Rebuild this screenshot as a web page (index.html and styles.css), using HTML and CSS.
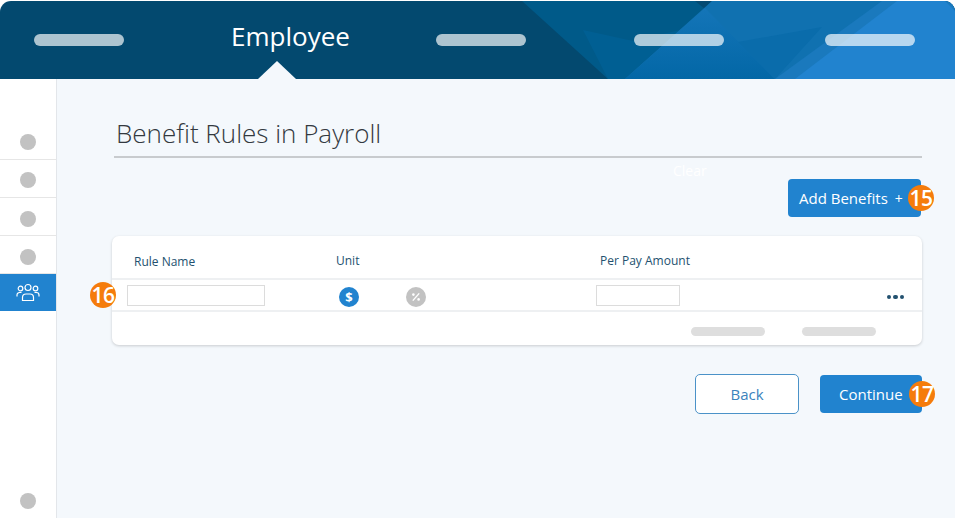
FILE: index.html
```html
<!DOCTYPE html>
<html lang="en">
<head>
    <meta charset="UTF-8">
    <meta name="viewport" content="width=device-width, initial-scale=1.0">
    <title>Benefit Rules in Payroll</title>
    <link rel="stylesheet" href="styles.css">
</head>
<body>
    <header class="topbar">
        <svg class="topbar-bg" viewBox="0 0 955 78" preserveAspectRatio="none" aria-hidden="true">
            <defs>
                <linearGradient id="facet" x1="0" y1="0" x2="0" y2="1">
                    <stop offset="0" stop-color="#1475b8"/>
                    <stop offset="1" stop-color="#0367a6"/>
                </linearGradient>
            </defs>
            <polygon points="522,0 955,0 955,78 608,78" fill="#005a89"/>
            <polygon points="583,29 633,40 680,29 625,78 608,78" fill="#005f93"/>
            <polygon points="695,0 712,0 705,8" fill="#044a72"/>
            <polygon points="712,0 955,0 955,78 625,78" fill="#1071b0"/>
            <polygon points="705,7 775,78 625,78" fill="url(#facet)"/>
            <polygon points="738,41 822,26 775,78" fill="#0a6cab"/>
            <polygon points="882,0 955,0 955,78 775,78" fill="#1a79bd"/>
            <polygon points="897,0 945,0 955,10 955,78 795,78" fill="#2183cf"/>
        </svg>
        <span class="step step-first"></span>
        <div class="step-current">Employee</div>
        <span class="step step-third"></span>
        <span class="step step-fourth"></span>
        <span class="step step-last"></span>
    </header>

    <div class="layout">
        <nav class="sidebar">
            <a class="side-item"><span class="dot"></span></a>
            <a class="side-item"><span class="dot"></span></a>
            <a class="side-item lower"><span class="dot"></span></a>
            <a class="side-item lower"><span class="dot"></span></a>
            <a class="side-item active">
                <svg width="24" height="20" viewBox="0 0 24 20" fill="none" stroke="#fff" stroke-width="1.2" aria-hidden="true">
                    <circle cx="12" cy="4.5" r="3"/>
                    <circle cx="4.5" cy="5.5" r="2.3"/>
                    <circle cx="19.5" cy="5.5" r="2.3"/>
                    <path d="M6.5 17.5v-3a3.5 3.5 0 0 1 3.5-3.5h4a3.5 3.5 0 0 1 3.5 3.5v3z"/>
                    <path d="M1 13.5v-1.5a2.5 2.5 0 0 1 2.5-2.5h2"/>
                    <path d="M23 13.5v-1.5a2.5 2.5 0 0 0-2.5-2.5h-2"/>
                </svg>
            </a>
            <span class="dot dot-bottom"></span>
        </nav>

        <main class="content">
            <h1 class="page-title">Benefit Rules in Payroll</h1>
            <div class="toolbar">
                <span class="clear-link">Clear</span>
                <button class="btn btn-primary btn-add">Add Benefits <span class="plus">+</span>
                    <span class="badge">15</span>
                </button>
            </div>

            <section class="card">
                <div class="card-head">
                    <span class="head-name">Rule Name</span>
                    <span>Unit</span>
                    <span>Per Pay Amount</span>
                </div>
                <div class="card-row">
                    <span class="badge badge-row">16</span>
                    <input type="text" class="field field-name">
                    <span class="unit unit-on">$</span>
                    <span class="unit unit-off">
                        <svg width="10" height="10" viewBox="0 0 10 10" aria-hidden="true">
                            <path d="M8.2 1.4 1.8 8.6" stroke="#fff" stroke-width="1.4"/>
                            <circle cx="2.4" cy="2.6" r="1.3" fill="#fff"/>
                            <circle cx="7.6" cy="7.4" r="1.3" fill="#fff"/>
                        </svg>
                    </span>
                    <input type="text" class="field field-amount">
                    <span class="more"><i></i><i></i><i></i></span>
                </div>
                <div class="card-foot">
                    <span class="foot-pill"></span>
                    <span class="foot-pill"></span>
                </div>
            </section>

            <div class="actions">
                <button class="btn btn-outline">Back</button>
                <button class="btn btn-primary btn-continue">Continue
                    <span class="badge">17</span>
                </button>
            </div>
        </main>
    </div>
</body>
</html>
```

FILE: styles.css
```css
* {
    box-sizing: border-box;
}

html,
body {
    height: 100%;
}

body {
    margin: 0;
    font-family: "Open Sans", "Liberation Sans", sans-serif;
    background-color: #fff;
    overflow: hidden;
}

/* top step bar */
.topbar {
    position: relative;
    display: flex;
    height: 78px;
    margin-top: 1px;
    padding-left: 34px;
    background-color: #03496f;
    border-radius: 11px 11px 0 0;
    overflow: hidden;
}

.topbar-bg {
    position: absolute;
    top: 0;
    left: 0;
    width: 100%;
    height: 100%;
}

.step {
    position: relative;
    width: 90px;
    height: 12px;
    margin-top: 33px;
    background-color: rgba(255, 255, 255, 0.68);
    border-radius: 6px;
}

.step-third {
    margin-left: 87px;
}

.step-fourth {
    margin-left: 108px;
}

.step-last {
    margin-left: 101px;
}

.step-current {
    position: relative;
    width: 118px;
    margin-left: 107px;
    padding-top: 17px;
    color: #fff;
    font-size: 26px;
    line-height: 36px;
    white-space: nowrap;
}

.step-current::after {
    content: "";
    position: absolute;
    left: 27px;
    bottom: 0;
    top: 60px;
    border-left: 19px solid transparent;
    border-right: 19px solid transparent;
    border-bottom: 18px solid #f4f8fc;
}

/* page body */
.layout {
    display: flex;
    height: 439px;
}

.sidebar {
    display: flex;
    flex-direction: column;
    width: 57px;
    padding-top: 43px;
    background-color: #fff;
    border-right: 1px solid #e3e6ea;
}

.side-item {
    display: flex;
    align-items: center;
    justify-content: center;
    height: 38px;
    padding-top: 2px;
    border-bottom: 1px solid #e6e6e6;
}

.side-item.lower {
    padding-top: 4px;
}

.side-item.active {
    height: 37px;
    padding-top: 0;
    background-color: #2183cf;
    border-bottom: 0;
}

.dot {
    display: block;
    width: 16px;
    height: 16px;
    background-color: #c2c2c2;
    border-radius: 50%;
}

.dot-bottom {
    margin: auto auto 9px;
}

.content {
    flex: 1;
    padding: 0 33px 0 55px;
    background-color: #f4f8fc;
}

.page-title {
    margin: 34px 0 0 2px;
    padding: 0 0 3px 2px;
    color: #33393f;
    font-size: 26px;
    font-weight: 300;
    line-height: 40px;
    border-bottom: 2px solid #c8cbce;
}

.toolbar {
    position: relative;
    display: flex;
    justify-content: flex-end;
    margin: 21px 1px 19px 0;
}

.clear-link {
    position: absolute;
    left: 561px;
    top: -18px;
    color: #fff;
    font-size: 14px;
    line-height: 20px;
}

.btn {
    position: relative;
    font-family: inherit;
    border-radius: 4px;
    cursor: pointer;
}

.btn-primary {
    color: #fff;
    background-color: #2183cf;
    border: 0;
}

.btn-add {
    width: 133px;
    height: 38px;
    padding: 0 0 0 11px;
    font-size: 15px;
    text-align: left;
}

.plus {
    margin-left: 3px;
    font-size: 14px;
}

.btn-outline {
    width: 104px;
    height: 40px;
    color: #3b83bd;
    font-size: 15px;
    background-color: #fff;
    border: 1px solid #4b92c8;
    border-radius: 5px;
}

.btn-continue {
    width: 102px;
    height: 38px;
    padding: 0 0 0 19px;
    font-size: 15px;
    text-align: left;
}

/* numbered callouts */
.badge {
    position: absolute;
    top: 50%;
    right: -13px;
    width: 26px;
    height: 26px;
    margin-top: -13px;
    color: #fff;
    font-size: 21px;
    font-weight: 600;
    line-height: 26px;
    letter-spacing: -0.5px;
    text-align: center;
    background-color: #f57c0c;
    border-radius: 50%;
}

.badge-row {
    right: auto;
    left: -22px;
}

/* benefit table */
.card {
    height: 109px;
    background-color: #fff;
    border-radius: 7px;
    box-shadow: 0 1px 3px rgba(0, 0, 0, 0.18);
}

.card-head {
    display: grid;
    grid-template-columns: 202px 264px 1fr;
    align-items: center;
    height: 44px;
    padding: 6px 0 0 22px;
    color: #23516f;
    font-size: 12px;
    border-bottom: 2px solid #eef0f2;
}

.head-name {
    margin-top: 2px;
}

.card-row {
    position: relative;
    display: grid;
    grid-template-columns: 212px 67px 190px 1fr auto;
    align-items: center;
    height: 32px;
    padding: 1px 18px 0 15px;
    border-bottom: 2px solid #eef0f2;
}

.field {
    height: 21px;
    margin: 0;
    padding: 0 4px;
    background-color: #fff;
    border: 1px solid #dcdcdc;
}

.field-name {
    width: 138px;
}

.field-amount {
    width: 84px;
}

.unit {
    display: flex;
    align-items: center;
    justify-content: center;
    width: 20px;
    height: 20px;
    margin-top: 3px;
    color: #fff;
    font-size: 13px;
    font-weight: 700;
    border-radius: 50%;
}

.unit-on {
    background-color: #2183cf;
}

.unit-off {
    background-color: #c2c2c2;
}

.more {
    display: flex;
    gap: 2px;
    margin-top: 3px;
}

.more i {
    width: 4.5px;
    height: 4.5px;
    background-color: #23516f;
    border-radius: 50%;
}

.card-foot {
    display: flex;
    gap: 37px;
    justify-content: flex-end;
    padding: 15px 46px 0 0;
}

.foot-pill {
    width: 74px;
    height: 9px;
    background-color: #dedede;
    border-radius: 5px;
}

.actions {
    display: flex;
    gap: 21px;
    align-items: center;
    justify-content: flex-end;
    margin-top: 29px;
}
```
